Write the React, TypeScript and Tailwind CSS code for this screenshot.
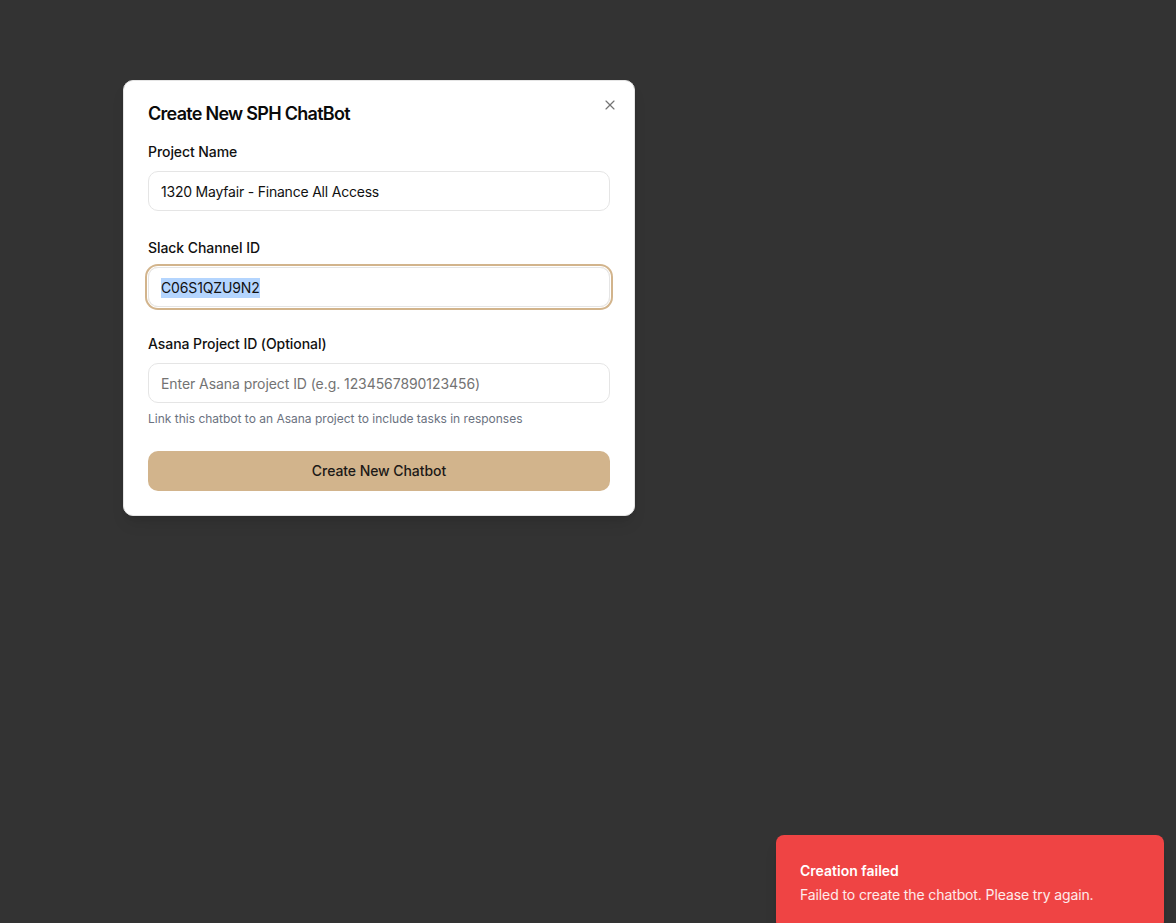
import { X } from "lucide-react";

const font = { fontFamily: "Inter, 'Noto Sans', sans-serif" };

function Field({ label, children }: { label: string; children: React.ReactNode }) {
    return (
        <div className="flex flex-col gap-[9px]">
            <label className="text-sm leading-5 font-medium tracking-[-0.005em] text-[#111111]">{label}</label>
            {children}
        </div>
    );
}

export default function App() {
    return (
        <div className="relative w-full h-[923px] overflow-hidden bg-[#333333]" style={font}>
            {/* Dialog */}
            <div className="absolute left-[123px] top-[80px] w-[512px] rounded-[10px] border border-[#e5e5e5] bg-white p-6 shadow-lg">
                <button className="absolute right-4 top-4 text-[#525252] opacity-80">
                    <X className="w-4 h-4" strokeWidth={1.75} />
                </button>
                <h2 className="text-lg leading-none font-semibold tracking-[-0.04em] text-[#0a0a0a]">
                    Create New SPH ChatBot
                </h2>

                <div className="mt-[19px] flex flex-col gap-[27px]">
                    <Field label="Project Name">
                        <div className="h-10 rounded-[10px] border border-[#e5e5e5] px-3 pt-px flex items-center text-sm tracking-[-0.015em] text-[#111111]">
                            1320 Mayfair - Finance All Access
                        </div>
                    </Field>

                    <Field label="Slack Channel ID">
                        <div className="h-10 rounded-[10px] border border-[#e5e5e5] px-3 pt-px flex items-center text-sm tracking-[-0.01em] text-[#111111] ring-2 ring-[#d2b48c] ring-offset-1">
                            <span className="bg-[#b4d5fe]">C06S1QZU9N2</span>
                        </div>
                    </Field>

                    <div className="flex flex-col">
                        <Field label="Asana Project ID (Optional)">
                            <div className="h-10 rounded-[10px] border border-[#e5e5e5] px-3 pt-px flex items-center text-sm tracking-[-0.005em] text-[#737373]">
                                Enter Asana project ID (e.g. 1234567890123456)
                            </div>
                        </Field>
                        <p className="mt-[8px] text-xs leading-4 text-[#6b7280]">
                            Link this chatbot to an Asana project to include tasks in responses
                        </p>
                    </div>
                </div>

                <button className="mt-[24px] h-10 w-full rounded-[10px] bg-[#d2b48c] text-sm font-medium tracking-[-0.005em] text-[#1c1917]">
                    Create New Chatbot
                </button>
            </div>

            {/* Toast */}
            <div className="absolute right-3 top-[835px] w-[388px] rounded-[8px] bg-[#ef4444] px-6 pt-[26px] pb-6 text-white shadow-lg">
                <div className="text-sm leading-5 font-semibold">Creation failed</div>
                <div className="mt-1 text-sm leading-5 tracking-[-0.008em] text-white/90">
                    Failed to create the chatbot. Please try again.
                </div>
            </div>
        </div>
    );
}
